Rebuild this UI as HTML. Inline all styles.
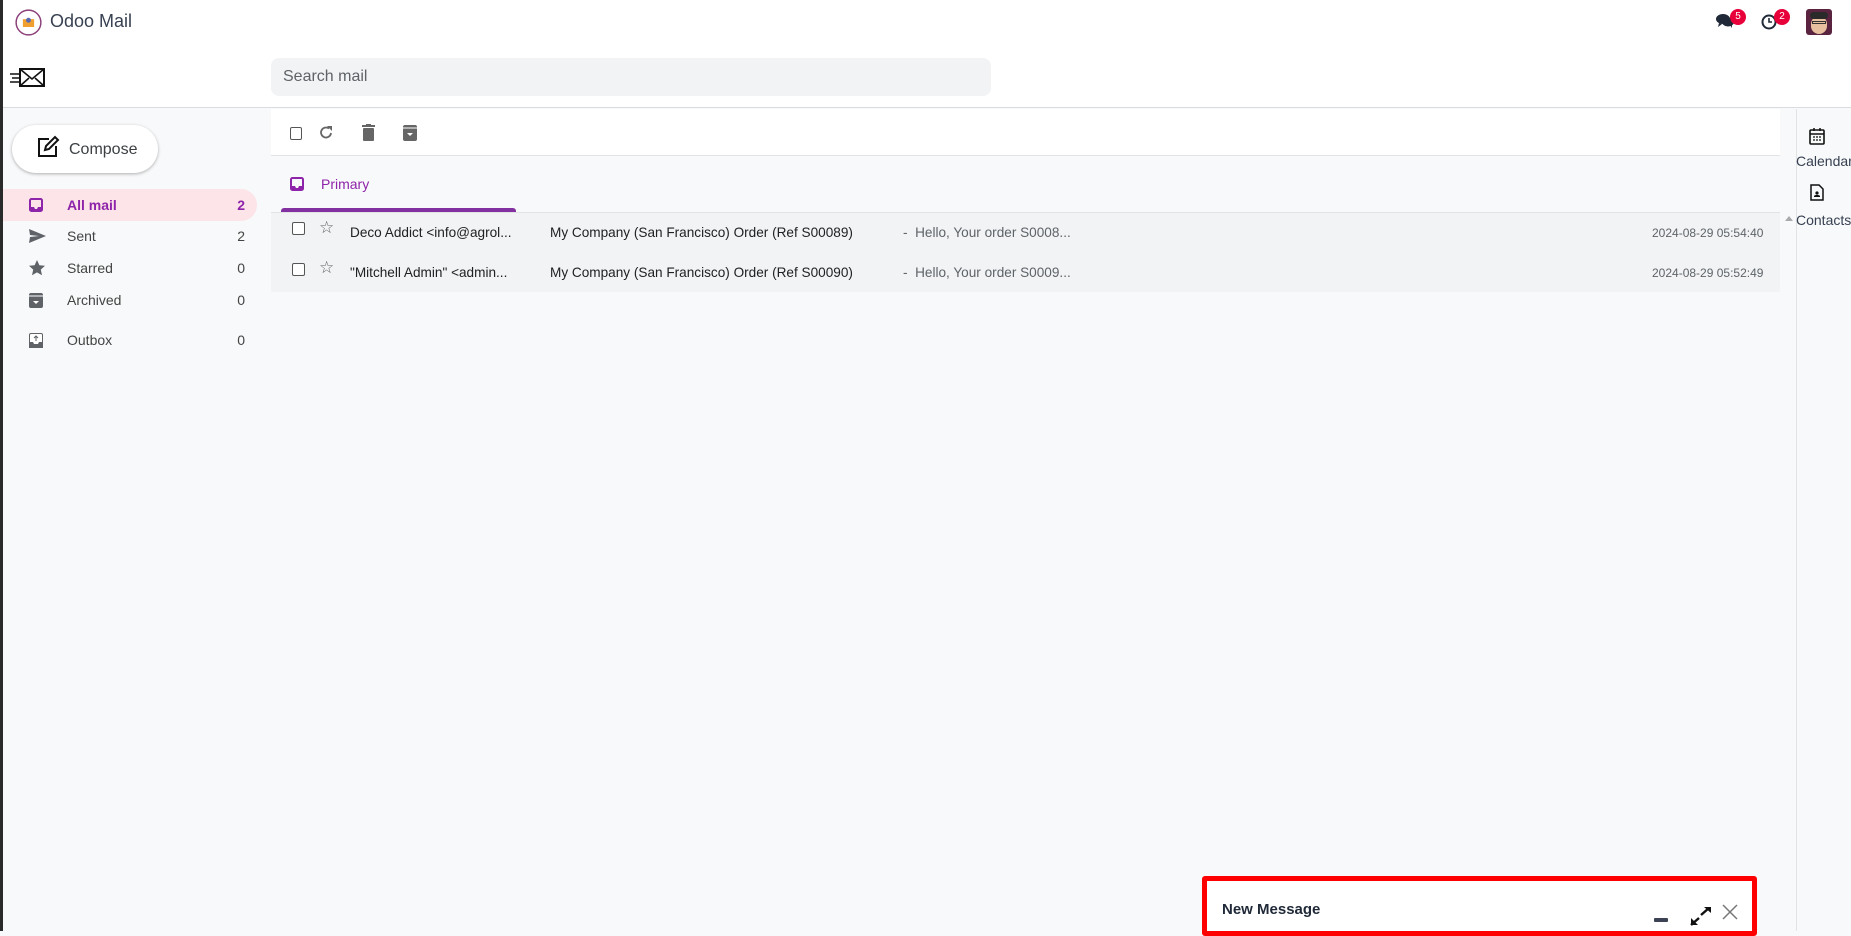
<!DOCTYPE html>
<html><head><meta charset="utf-8"><style>
*{box-sizing:border-box;margin:0;padding:0}
body{width:1851px;height:931px;overflow:hidden;background:#f8f9fa;font-family:"Liberation Sans",Roboto,sans-serif;color:#202124;position:relative}
.abs{position:absolute}
.lb{left:0;top:0;width:3px;height:931px;background:#2a2a2a}
.top{left:3px;top:0;width:1848px;height:108px;background:#fff;border-bottom:1px solid #dadce0}
.nav{height:32px;display:flex;align-items:center;font-size:14px}
.nav span{position:absolute}
.r{font-size:13.6px}
</style></head><body>
<div class="abs lb"></div>
<div class="abs top"></div>
<svg class="abs" style="left:15px;top:9px" width="27" height="27" viewBox="0 0 24 24"><circle cx="12" cy="12" r="11" fill="#fff" stroke="#8b3f78" stroke-width="1.3"/><rect x="7" y="9" width="10" height="7" fill="#f0a030"/><circle cx="12" cy="10" r="2.2" fill="#5a6ab0"/></svg>
<div class="abs" style="left:50px;top:11px;font-size:18px;color:#374151">Odoo Mail</div>
<svg class="abs" style="left:9px;top:66px" width="36" height="22" viewBox="0 0 36 22"><rect x="11" y="3" width="24" height="17" fill="none" stroke="#111" stroke-width="2"/><path d="M11 3l12 10 12-10M11 20l9-8M35 20l-9-8" fill="none" stroke="#111" stroke-width="1.6"/><path d="M1 8h9M3 12h7M1 16h9" stroke="#111" stroke-width="1.6"/></svg>
<div class="abs" style="left:271px;top:58px;width:720px;height:38px;background:#f1f3f4;border-radius:8px;font-size:16px;color:#5f6368;padding:10px 12px">Search mail</div>
<svg class="abs" style="left:1716px;top:13px" width="18" height="16" viewBox="0 0 18 16"><ellipse cx="7" cy="6" rx="7" ry="5" fill="#1f2937"/><ellipse cx="12" cy="9" rx="6" ry="4.5" fill="#1f2937"/><path d="M3 10l-1 4 4-3z M14 12l2 3 0-4z" fill="#1f2937"/></svg>
<div class="abs" style="left:1730px;top:9px;width:16px;height:16px;border-radius:8px;background:#e8003a;color:#fff;font-size:10px;text-align:center;line-height:16px">5</div>
<svg class="abs" style="left:1761px;top:14px" width="16" height="16" viewBox="0 0 16 16"><circle cx="8" cy="8" r="6.5" fill="none" stroke="#1f2937" stroke-width="2"/><path d="M8 4v4h3" stroke="#1f2937" stroke-width="1.6" fill="none"/></svg>
<div class="abs" style="left:1774px;top:9px;width:16px;height:16px;border-radius:8px;background:#e8003a;color:#fff;font-size:10px;text-align:center;line-height:16px">2</div>
<div class="abs" style="left:1806px;top:9px;width:26px;height:26px;border-radius:3px;background:#5a2440;overflow:hidden"><div style="position:absolute;left:5px;top:7px;width:16px;height:18px;border-radius:8px;background:#e8c0a0"></div><div style="position:absolute;left:4px;top:3px;width:18px;height:7px;border-radius:4px;background:#2a2a2a"></div><div style="position:absolute;left:6px;top:12px;width:14px;height:3px;border:1px solid #333"></div></div>
<!-- sidebar -->
<div class="abs" style="left:12px;top:125px;width:146px;height:48px;border-radius:24px;background:#fff;box-shadow:0 1px 3px rgba(0,0,0,.3)"></div>
<svg class="abs" style="left:36px;top:135px" width="24" height="24" viewBox="0 0 24 24"><path d="M13 4H3v17h17V11" fill="none" stroke="#111" stroke-width="2"/><path d="M9 15l1-4 9-9 3 3-9 9z" fill="none" stroke="#111" stroke-width="2"/></svg>
<div class="abs" style="left:69px;top:141px;font-size:16px;color:#3c4043">Compose</div>
<div class="abs" style="left:3px;top:189px;width:254px;height:32px;background:#fce4e8;border-radius:0 16px 16px 0"></div>
<div class="abs nav" style="left:29px;top:189px;width:216px;color:#8e24aa;font-weight:bold"><svg width="14" height="14" viewBox="0 0 14 14"><rect x="1" y="1" width="12" height="12" rx="1.5" fill="none" stroke="#8e24aa" stroke-width="2"/><path d="M1 9h4l1 2h2l1-2h4v4H1z" fill="#8e24aa"/></svg><span style="left:38px">All mail</span><span style="right:0">2</span></div>
<div class="abs nav" style="left:29px;top:220px;width:216px;color:#444"><svg width="17" height="14" viewBox="0 0 17 14"><path d="M0 0l17 7-17 7 1-6 9-1-9-1z" fill="#5f6368"/></svg><span style="left:38px">Sent</span><span style="right:0">2</span></div>
<div class="abs nav" style="left:29px;top:252px;width:216px;color:#444"><svg width="16" height="16" viewBox="0 0 16 16"><path d="M8 0l2.4 5.2 5.6.6-4.2 3.8 1.2 5.6L8 12.4 3 15.2l1.2-5.6L0 5.8l5.6-.6z" fill="#5f6368"/></svg><span style="left:38px">Starred</span><span style="right:0">0</span></div>
<div class="abs nav" style="left:29px;top:284px;width:216px;color:#444"><svg width="14" height="15" viewBox="0 0 14 15"><rect x="0" y="0" width="14" height="15" rx="2" fill="#5f6368"/><path d="M0 3h14" stroke="#fff"/><path d="M4 8h6l-3 3z" fill="#fff"/></svg><span style="left:38px">Archived</span><span style="right:0">0</span></div>
<div class="abs nav" style="left:29px;top:324px;width:216px;color:#444"><svg width="14" height="15" viewBox="0 0 14 15"><rect x="0.5" y="0.5" width="13" height="14" rx="1.5" fill="#fff" stroke="#5f6368"/><path d="M0 9h4l1 2h4l1-2h4v6H0z" fill="#5f6368"/><path d="M7 8V3M5 5l2-2 2 2" stroke="#5f6368" fill="none"/></svg><span style="left:38px">Outbox</span><span style="right:0">0</span></div>
<!-- main -->
<div class="abs" style="left:271px;top:109px;width:1509px;height:47px;background:#fff;border-bottom:1px solid #e2e3e5"></div>
<div class="abs" style="left:290px;top:127px;width:12px;height:13px;border:1px solid #555;border-radius:2px;background:#fff"></div>
<svg class="abs" style="left:319px;top:125px" width="14" height="15" viewBox="0 0 14 15"><path d="M12 8a5 5 0 1 1-2-4.5" fill="none" stroke="#666" stroke-width="1.8"/><path d="M8 1h5v5z" fill="#666"/></svg>
<svg class="abs" style="left:362px;top:124px" width="13" height="17" viewBox="0 0 13 17"><rect x="0" y="1" width="13" height="2" fill="#666"/><rect x="4" y="0" width="5" height="2" fill="#666"/><rect x="1" y="4" width="11" height="13" rx="1" fill="#666"/></svg>
<svg class="abs" style="left:403px;top:125px" width="14" height="16" viewBox="0 0 14 16"><rect width="14" height="16" rx="2" fill="#666"/><path d="M0 3h14" stroke="#fff"/><path d="M4 8h6l-3 3z" fill="#fff"/></svg>
<svg class="abs" style="left:290px;top:177px" width="14" height="14" viewBox="0 0 14 14"><rect x="1" y="1" width="12" height="12" rx="1.5" fill="none" stroke="#8e24aa" stroke-width="2"/><path d="M1 9h4l1 2h2l1-2h4v4H1z" fill="#8e24aa"/></svg>
<div class="abs" style="left:321px;top:176px;font-size:14px;color:#8e24aa">Primary</div>
<div class="abs" style="left:281px;top:208px;width:235px;height:4px;background:#8330a0;border-radius:3px 3px 0 0"></div>
<div class="abs" style="left:271px;top:212px;width:1509px;height:80px;background:#f1f3f4;border-top:1px solid #e2e3e5"></div>
<div class="abs" style="left:292px;top:222px;width:13px;height:13px;border:1px solid #555;border-radius:2px;background:#fff"></div>
<div class="abs" style="left:292px;top:263px;width:13px;height:13px;border:1px solid #555;border-radius:2px;background:#fff"></div>
<div class="abs" style="left:319px;top:218px;font-size:17px;color:#666">☆</div>
<div class="abs" style="left:319px;top:258px;font-size:17px;color:#666">☆</div>
<div class="abs r" style="left:350px;top:225px;color:#202124">Deco Addict &lt;info@agrol...</div>
<div class="abs r" style="left:350px;top:265px;color:#202124">"Mitchell Admin" &lt;admin...</div>
<div class="abs r" style="left:550px;top:225px;color:#202124">My Company (San Francisco) Order (Ref S00089)</div>
<div class="abs r" style="left:550px;top:265px;color:#202124">My Company (San Francisco) Order (Ref S00090)</div>
<div class="abs r" style="left:903px;top:225px;color:#5f6368">-&nbsp;&nbsp;Hello, Your order S0008...</div>
<div class="abs r" style="left:903px;top:265px;color:#5f6368">-&nbsp;&nbsp;Hello, Your order S0009...</div>
<div class="abs" style="left:1652px;top:226px;font-size:12px;color:#5f6368">2024-08-29 05:54:40</div>
<div class="abs" style="left:1652px;top:266px;font-size:12px;color:#5f6368">2024-08-29 05:52:49</div>
<!-- right bar -->
<div class="abs" style="left:1796px;top:109px;width:1px;height:822px;background:#e2e3e5"></div>
<div class="abs" style="left:1797px;top:109px;width:54px;height:822px;background:#f8f9fa"></div>
<svg class="abs" style="left:1809px;top:127px" width="16" height="18" viewBox="0 0 16 18"><rect x="1" y="3" width="14" height="14" rx="1" fill="none" stroke="#111" stroke-width="1.6"/><path d="M1 7h14M5 1v3M11 1v3" stroke="#111" stroke-width="1.5"/><path d="M4 10h2M7 10h2M10 10h2M4 13h2M7 13h2M10 13h2" stroke="#111" stroke-width="1.2"/></svg>
<div class="abs" style="left:1796px;top:153px;font-size:14px;color:#374151">Calendar</div>
<svg class="abs" style="left:1810px;top:184px" width="14" height="17" viewBox="0 0 14 17"><path d="M1 1h8l4 4v11H1z" fill="none" stroke="#111" stroke-width="1.5"/><circle cx="7" cy="9" r="1.6" fill="#111"/><path d="M4 13h6v-1c-1-1.5-5-1.5-6 0z" fill="#111"/></svg>
<div class="abs" style="left:1796px;top:212px;font-size:14px;color:#374151">Contacts</div>
<div class="abs" style="left:1785px;top:216px;width:0;height:0;border-left:4px solid transparent;border-right:4px solid transparent;border-bottom:5px solid #aaa"></div>
<!-- new message -->
<div class="abs" style="left:1202px;top:876px;width:555px;height:60px;border:5px solid #ff0000;background:#fff;border-radius:3px"></div>
<div class="abs" style="left:1222px;top:901px;font-size:15px;font-weight:bold;color:#1f2937">New Message</div>
<div class="abs" style="left:1654px;top:918px;width:14px;height:4px;background:#3a4254;border-radius:1px"></div>
<svg class="abs" style="left:1690px;top:906px" width="22" height="20" viewBox="0 0 22 20"><path d="M11 9l8-7M1 19l8-7" stroke="#111" stroke-width="2.4"/><path d="M14 1h7v6z M1 12v7h7z" fill="#111"/></svg>
<svg class="abs" style="left:1722px;top:904px" width="16" height="16" viewBox="0 0 16 16"><path d="M1 1l14 14M15 1L1 15" stroke="#777" stroke-width="1.5"/></svg>
</body></html>
